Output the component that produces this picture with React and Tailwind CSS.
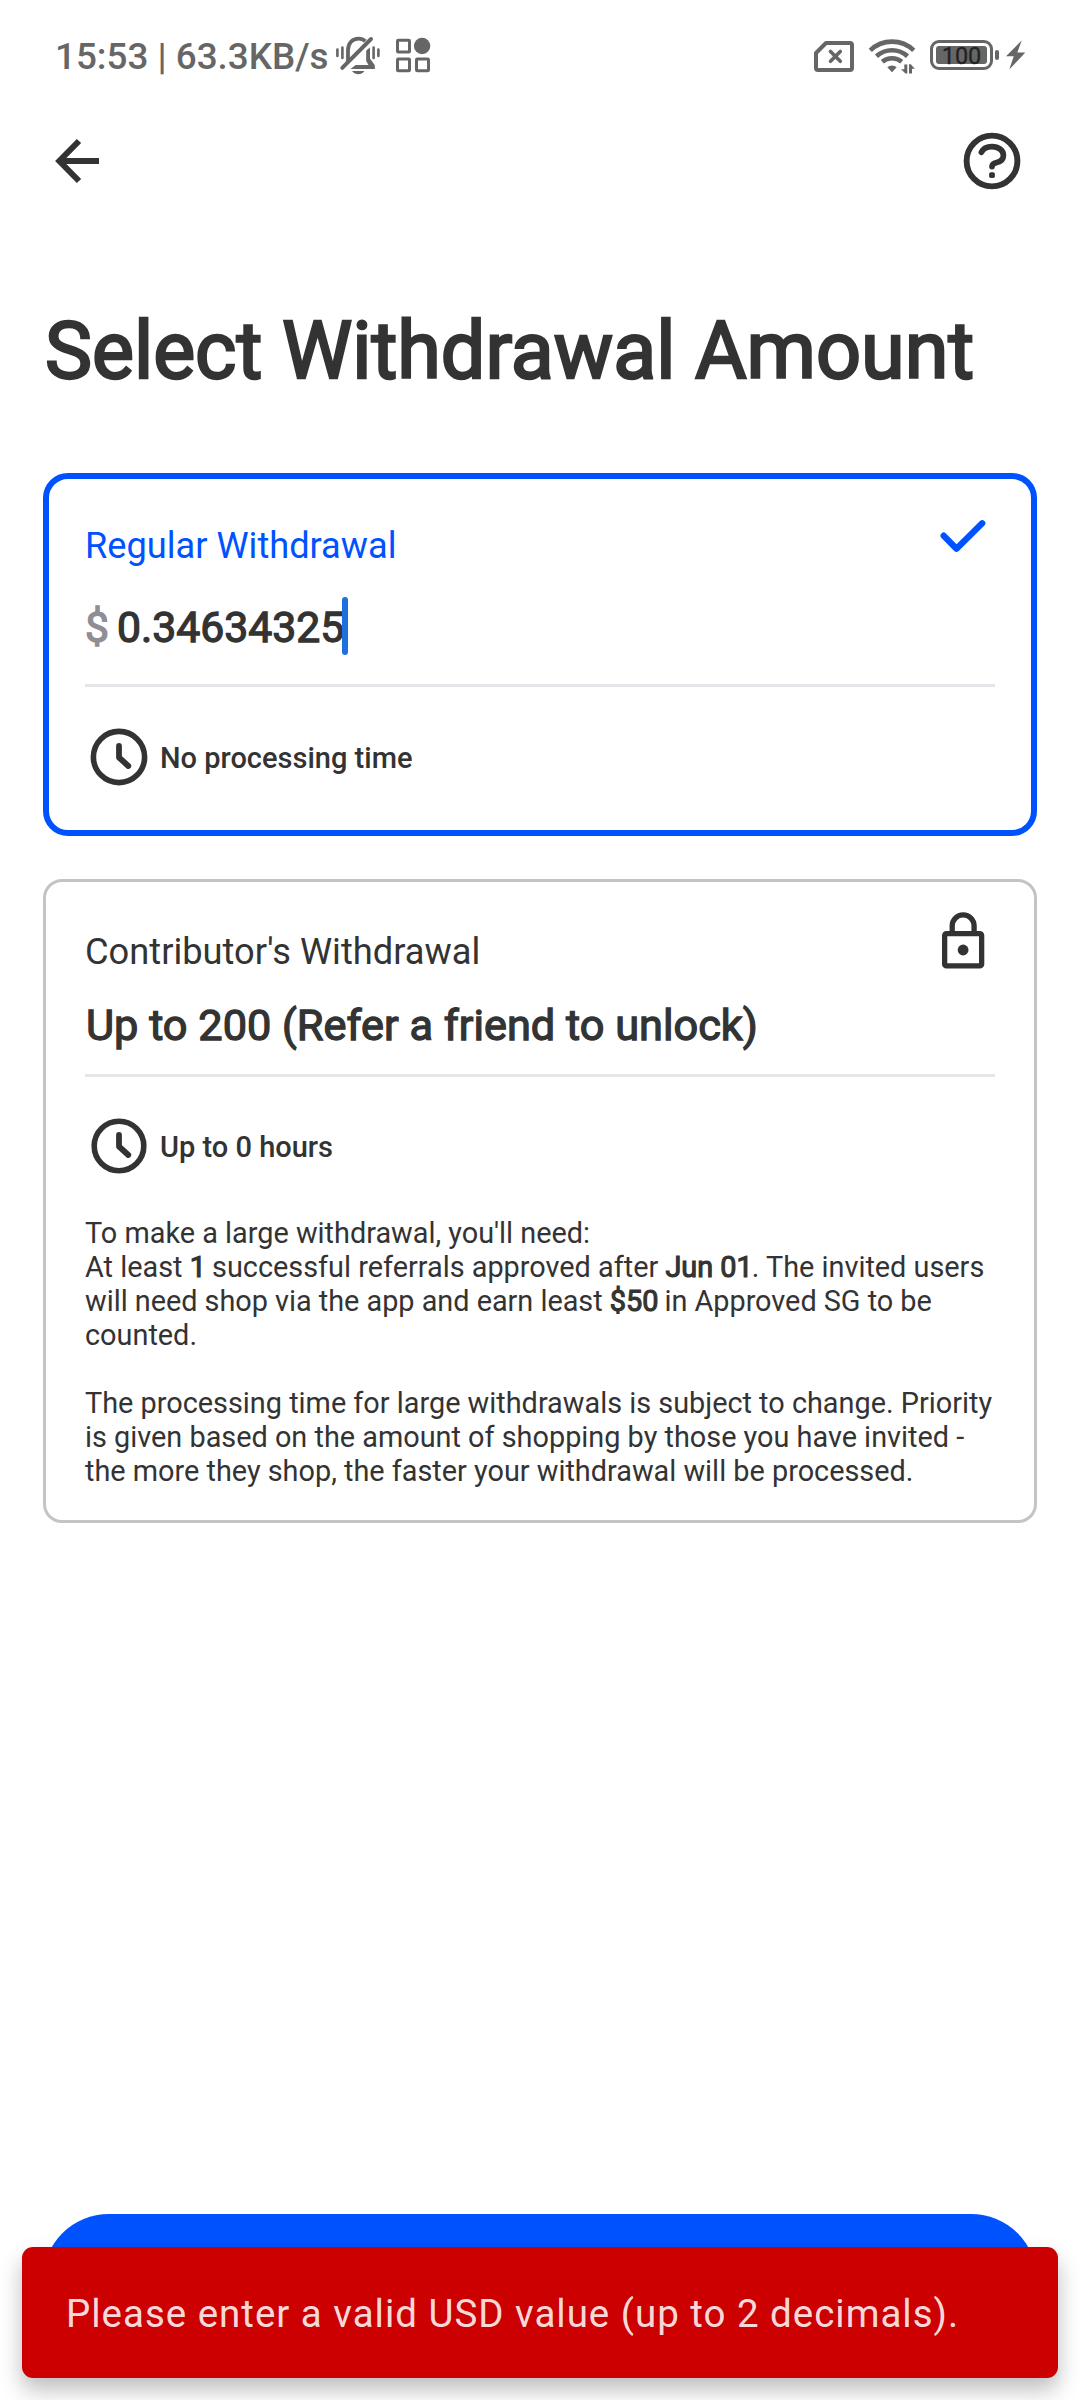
import React from "react";

function MutedBellIcon() {
  return (
    <svg className="h-[40px] w-[46px]" viewBox="335 36 46 40" fill="none" stroke="#666" strokeLinecap="round">
      <path d="M337.4 49.5v6.5M342.4 47.5v10.5M373.6 47.5v10.5M378.4 49.5v6.5" strokeWidth="2.6" />
      <path d="M348 62V50.5C348 43 352.500 38.600 358.500 38.600c2.800 0 5 .9 6.800 2.600" strokeWidth="3.800" strokeLinecap="butt" />
      <path d="M366.200 50.500 370 47.500V58.500l4.800 6.800v3.600H350.500l5.200-4H368.500L366.200 61Z" fill="#666" stroke="none" />
      <path d="M342.300 67.800 371 39" strokeWidth="4" />
      <path d="M352 71h12.500c-1.800 2.200-3.800 3.300-6.200 3.300S353.800 73.200 352 71Z" fill="#666" stroke="none" />
    </svg>
  );
}

function AppsIcon() {
  return (
    <svg className="h-[36px] w-[36px]" viewBox="395 37 36 36" fill="none" stroke="#666" strokeWidth="3">
      <rect x="397.500" y="40.300" width="12" height="11.700" rx=".8" />
      <rect x="397.500" y="59" width="12" height="11.700" rx=".8" />
      <rect x="416.500" y="59" width="12" height="11.700" rx=".8" />
      <circle cx="422.100" cy="46" r="8.200" fill="#666" stroke="none" />
    </svg>
  );
}

function NoSimIcon() {
  return (
    <svg className="h-[32px] w-[40px]" viewBox="814 41 40 32" fill="none" stroke="#666">
      <path d="M826 43H850a2 2 0 0 1 2 2V68a2 2 0 0 1-2 2H818a2 2 0 0 1-2-2V53Z" strokeWidth="4" strokeLinejoin="round" />
      <path d="m830.500 51.500 9.800 9.800m0-9.800-9.800 9.800" strokeWidth="3.600" strokeLinecap="round" />
    </svg>
  );
}

function WifiIcon() {
  return (
    <svg className="h-[36px] w-[48px]" viewBox="868 38 48 36" fill="none" stroke="#666" strokeWidth="4.600">
      <path d="M870.300 50.300A31.400 31.400 0 0 1 913.700 50.300" />
      <path d="M876.500 56.200A23 23 0 0 1 907.500 56.200" />
      <path d="M882.300 61.800A15 15 0 0 1 901.700 61.800" />
      <path d="M887.300 67.300a7 7 0 0 1 9.400 0L892 72.200Z" fill="#666" stroke="none" />
      <path d="M904.300 64.500h3V73.500h-1.800l-4.500-4.300h3.300ZM909 73.500V64.300h1.800l4 4.500H912V73.500Z" fill="#666" stroke="none" />
    </svg>
  );
}

function BoltIcon() {
  return (
    <svg className="h-[30px] w-[20px]" viewBox="1006 40.500 20 30" fill="#666">
      <path d="M1021.800 40.800 1006 56.800h7.700L1009.300 70 1025.300 53h-8Z" />
    </svg>
  );
}

function StatusBar() {
  return (
    <div className="flex h-[110px] items-start pt-[36px] text-[#666]">
      <div className="ml-[55px] h-[40px] w-[280px] whitespace-nowrap pt-px text-[36.800px] font-medium leading-[40px]">
        15:53 | 63.3KB/s
      </div>
      <MutedBellIcon />
      <div className="ml-[14px] mt-px">
        <AppsIcon />
      </div>
      <div className="ml-[383px] mt-[5px]">
        <NoSimIcon />
      </div>
      <div className="ml-[14px] mt-[2px]">
        <WifiIcon />
      </div>
      <div className="ml-[14px] mt-[4px] h-[30px] w-[63px] rounded-[9px] border-[3px] border-[#666] p-[3px]">
        <div className="flex h-[18px] items-center justify-center rounded-[3px] bg-[#666] pt-[2px] text-[23.500px] leading-[18px] text-[#222] [-webkit-text-stroke:0.300px_#222]">
          100
        </div>
      </div>
      <div className="ml-[2px] mt-[14px] h-[10px] w-[4px] rounded-[2px] bg-[#666]" />
      <div className="ml-[7px] mt-[4px]">
        <BoltIcon />
      </div>
    </div>
  );
}

function BackIcon() {
  return (
    <svg className="h-[48px] w-[48px]" viewBox="54 137 48 48" fill="none" stroke="#333" strokeWidth="6">
      <path d="M79 141 59.300 161 79 181" />
      <path d="M60 161H99" />
    </svg>
  );
}

function HelpIcon() {
  return (
    <svg className="h-[60px] w-[60px]" viewBox="962 131 60 60" fill="none" stroke="#333">
      <circle cx="992" cy="161" r="25.400" strokeWidth="5.900" />
      <path
        d="M981.400 152.300C983.200 148.500 987.300 146.600 992 146.600C998.500 146.600 1003.400 150.400 1003.400 155.400C1003.400 159.300 1000.800 161.400 996.800 162.400C993.600 163.200 992 164.300 992 166.600"
        strokeWidth="5.700"
        strokeLinecap="round"
      />
      <rect x="989.100" y="172.200" width="5.800" height="5.800" rx="1.800" fill="#333" stroke="none" />
    </svg>
  );
}

function ClockIcon({ radius }) {
  return (
    <svg className="h-[64px] w-[64px]" viewBox="-32 -32 64 64" fill="none" stroke="#333">
      <circle r={radius} strokeWidth="5.600" />
      <path d="M0-11V0.500L9.300 9" strokeWidth="5.800" strokeLinecap="round" strokeLinejoin="round" />
    </svg>
  );
}

function CheckIcon() {
  return (
    <svg className="-mt-[6px] mr-[8px] h-[36px] w-[48px]" viewBox="939 518 48 36" fill="none" stroke="#0052ff">
      <path d="M943.700 535.700 956.500 548.700 982.200 523.300" strokeWidth="6.300" strokeLinecap="round" strokeLinejoin="round" />
    </svg>
  );
}

function LockIcon() {
  return (
    <svg className="-mt-[20px] mr-[8px] h-[60px] w-[48px]" viewBox="939 910 48 60" fill="none" stroke="#333" strokeWidth="5.300">
      <rect x="944.650" y="933.650" width="37" height="32.300" rx="1.800" />
      <path d="M952.200 933V925.800a10.900 10.900 0 0 1 21.900 0V933" />
      <circle cx="963.100" cy="950" r="5.400" fill="#333" stroke="none" />
    </svg>
  );
}

function ProcessingTime({ radius, children }) {
  return (
    <div className="ml-[2px] flex items-center gap-[9px] text-[29px] font-medium leading-[34px]">
      <ClockIcon radius={radius} />
      <span className="pt-[2px]">{children}</span>
    </div>
  );
}

function Strong({ children }) {
  return <span className="-mr-px [-webkit-text-stroke:1.100px_#333]">{children}</span>;
}

export default function App() {
  return (
    <div className="relative flex h-[2400px] w-[1080px] flex-col overflow-hidden bg-white font-['Roboto',sans-serif] text-[#333]">
      <StatusBar />

      <header className="flex h-[102px] items-center justify-between pl-[54px] pr-[58px]">
        <BackIcon />
        <HelpIcon />
      </header>

      <h1 className="mb-[75px] ml-[45px] mt-[92px] whitespace-nowrap text-[79.100px] leading-[94px] [-webkit-text-stroke:2.400px_#333]">
        Select Withdrawal Amount
      </h1>

      <section className="mx-[43px] h-[363px] rounded-[25px] border-[6px] border-[#0052ff] px-[36px] pt-[45px]">
        <div className="flex h-[44px] items-start justify-between text-[36.200px] leading-[44px] text-[#0052ff]">
          <span>Regular Withdrawal</span>
          <CheckIcon />
        </div>
        <div className="mt-[29px] flex h-[58px] text-[42.700px]">
          <span className="w-[32px] pt-[3px] leading-[54px] text-[#8e8e93] [-webkit-text-stroke:1.300px_#8e8e93]">$</span>
          <span className="w-[225px] pt-[3px] leading-[54px] [-webkit-text-stroke:1.300px_#333]">0.34634325</span>
          <span className="z-10 w-[6px] rounded-[3px] bg-[#1f70dd]" />
        </div>
        <div className="mb-[38px] mt-[29px] h-[3px] bg-[#e5e5ea]" />
        <ProcessingTime radius="25.600">No processing time</ProcessingTime>
      </section>

      <section className="mx-[43px] mt-[43px] h-[644px] rounded-[19px] border-[3px] border-[#c4c4c6] px-[39px] pt-[48px]">
        <div className="flex h-[44px] items-start justify-between text-[36.250px] leading-[44px]">
          <span>Contributor's Withdrawal</span>
          <LockIcon />
        </div>
        <div className="ml-px mt-[26px] whitespace-nowrap text-[43.300px] leading-[52px] [-webkit-text-stroke:1.300px_#333]">
          Up to 200 (Refer a friend to unlock)
        </div>
        <div className="mb-[37px] mt-[22px] h-[3px] bg-[#e5e5ea]" />
        <ProcessingTime radius="24.800">Up to 0 hours</ProcessingTime>
        <div className="mt-[38px] whitespace-nowrap text-[28.850px] leading-[34px]">
          <p>
            To make a large withdrawal, you'll need:
            <br />
            At least <Strong>1</Strong> successful referrals approved after <Strong>Jun 01</Strong>. The invited users
            <br />
            <span className="tracking-[-0.020px]">
              will need shop via the app and earn least <Strong>$50</Strong> in Approved SG to be
            </span>
            <br />
            counted.
          </p>
          <p className="mt-[34px]">
            The processing time for large withdrawals is subject to change. Priority
            <br />
            is given based on the amount of shopping by those you have invited -
            <br />
            the more they shop, the faster your withdrawal will be processed.
          </p>
        </div>
      </section>

      <button className="mx-[43px] mb-[54px] mt-auto h-[132px] shrink-0 rounded-full bg-[#0052ff]" aria-label="Continue" />

      <div className="absolute bottom-[22px] left-[22px] flex h-[131px] w-[1036px] items-center whitespace-nowrap rounded-[11px] bg-[#cc0000] pl-[44px] pt-[3px] text-[38.500px] leading-[46px] tracking-[0.980px] text-white/87 shadow-[0_12px_22px_rgba(0,0,0,0.26)]">
        Please enter a valid USD value (up to 2 decimals).
      </div>
    </div>
  );
}
